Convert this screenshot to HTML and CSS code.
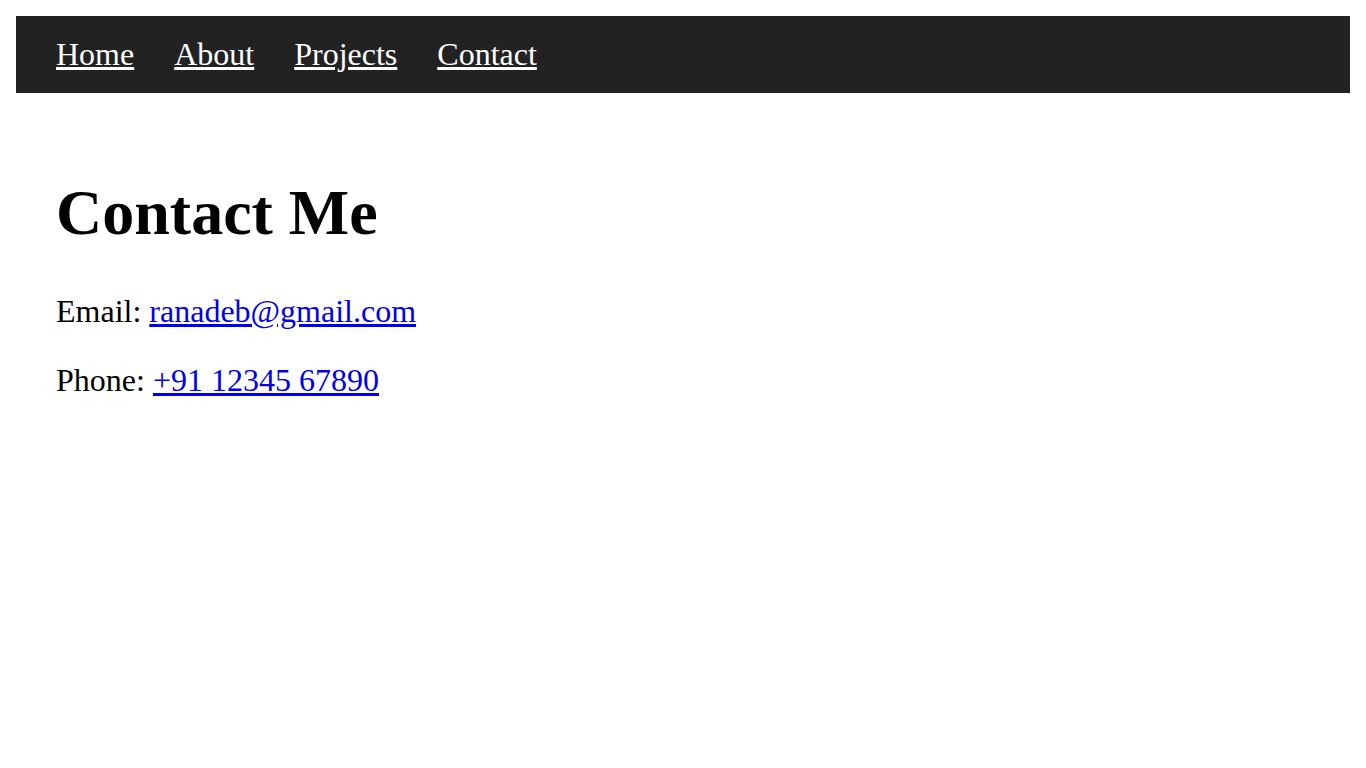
FILE: index.html
```html
<!DOCTYPE html>
<html lang="en">
<head>
<meta charset="utf-8">
<title>Contact</title>
<link rel="stylesheet" href="styles.css">
</head>
<body>
<nav class="nav">
<a class="nav-link" href="#">Home</a>
<a class="nav-link" href="#">About</a>
<a class="nav-link" href="#">Projects</a>
<a class="nav-link" href="#">Contact</a>
</nav>
<main class="content">
<h1 class="title">Contact Me</h1>
<p class="line">Email: <a class="link" href="#">ranadeb@gmail.com</a></p>
<p class="line">Phone: <a class="link" href="#">+91 12345 67890</a></p>
</main>
</body>
</html>
```
FILE: styles.css
```css
html, body {
  background: #ffffff;
}
body {
  margin: 16px;
  font-family: "Liberation Serif", "Times New Roman", serif;
  font-size: 32px;
  color: #000000;
}
.nav {
  display: flex;
  gap: 40px;
  background: #222222;
  padding: 20px 40px;
}
.nav-link {
  color: #ffffff;
  text-decoration: underline;
}
.content {
  padding: 40px;
}
.title {
  font-size: 64px;
  font-weight: bold;
  margin: 42.88px 0;
}
.line {
  margin: 32px 0;
}
.link {
  color: #0000ee;
  text-decoration: underline;
}
```
